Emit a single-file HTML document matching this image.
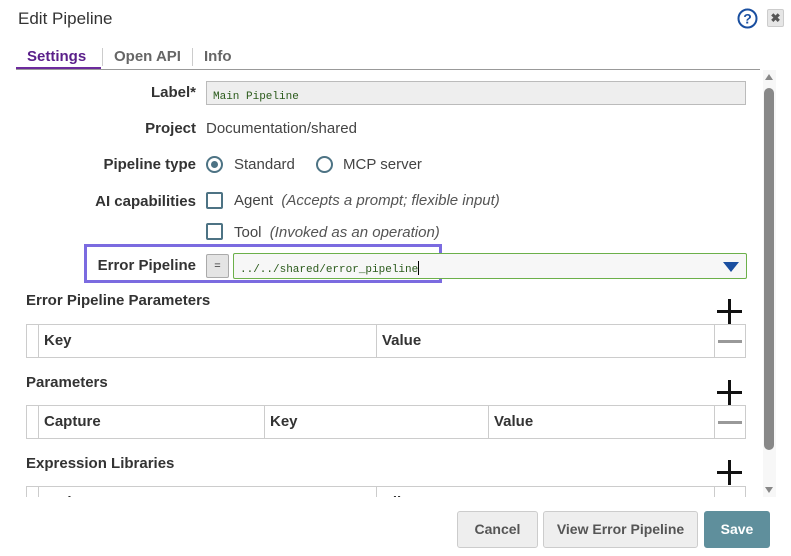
<!DOCTYPE html>
<html><head><style>
*{box-sizing:border-box;margin:0;padding:0}
body{width:791px;height:556px;background:#fff;font-family:"Liberation Sans",sans-serif;color:#333;position:relative;overflow:hidden}
.a{position:absolute}
.lbl{position:absolute;right:595px;font-weight:bold;font-size:15px;color:#333;text-align:right;white-space:nowrap}
.t{font-size:15px;color:#444;white-space:nowrap}
.h{font-weight:bold;font-size:15px;color:#333}
.tb{position:absolute;border:1px solid #ccc;left:26px;width:720px;height:34px;background:#fff}
.c{position:absolute;top:0;bottom:0;border-left:1px solid #ccc;font-weight:bold;font-size:15px;padding:7px 0 0 5px;color:#333}
.plus{position:absolute;left:717px;width:25px;height:25px}
.plus:before{content:"";position:absolute;left:11px;top:0;width:3px;height:25px;background:#111}
.plus:after{content:"";position:absolute;top:11px;left:0;height:3px;width:25px;background:#111}
.minus{position:absolute;left:718px;width:24px;height:3px;background:#999}
.mono{font-family:"Liberation Mono",monospace;font-size:11px;color:#2a5a1a;line-height:14px}
.btn{position:absolute;top:511px;height:37px;border:1px solid #ccc;border-radius:3px;background:#eee;font-weight:bold;font-size:14px;color:#555;text-align:center;line-height:35px}
</style></head><body>
<div class="a" style="left:18px;top:9px;font-size:17px;color:#333">Edit Pipeline</div>
<svg class="a" style="left:737px;top:8px" width="21" height="21" viewBox="0 0 21 21"><circle cx="10.5" cy="10.5" r="9" fill="none" stroke="#1a4fa0" stroke-width="2"/><text x="10.5" y="15.5" text-anchor="middle" font-family="Liberation Sans" font-weight="bold" font-size="14" fill="#1a4fa0">?</text></svg>
<div class="a" style="left:767px;top:9px;width:17px;height:18px;background:#e6e6e6;border:1px solid #ccc;border-radius:2px;font-size:12px;font-weight:bold;color:#555;text-align:center;line-height:16px">✖</div>
<div class="a" style="left:27px;top:48px;font-weight:bold;font-size:15px;color:#5a1f8a">Settings</div>
<div class="a" style="left:16px;top:67px;width:85px;height:3px;background:#6c2a9c"></div>
<div class="a" style="left:102px;top:48px;width:1px;height:18px;background:#ccc"></div>
<div class="a" style="left:114px;top:48px;font-weight:bold;font-size:15px;color:#666">Open API</div>
<div class="a" style="left:192px;top:48px;width:1px;height:18px;background:#ccc"></div>
<div class="a" style="left:204px;top:48px;font-weight:bold;font-size:15px;color:#666">Info</div>
<div class="a" style="left:16px;top:69px;width:744px;height:1px;background:#999"></div>
<!-- scrollbar -->
<div class="a" style="left:763px;top:70px;width:13px;height:427px;background:#f7f7f7"></div>
<div class="a" style="left:765px;top:74px;width:0;height:0;border-left:4px solid transparent;border-right:4px solid transparent;border-bottom:6px solid #888"></div>
<div class="a" style="left:764px;top:88px;width:10px;height:362px;background:#888;border-radius:5px"></div>
<div class="a" style="left:765px;top:487px;width:0;height:0;border-left:4px solid transparent;border-right:4px solid transparent;border-top:6px solid #888"></div>

<div class="lbl" style="top:84px">Label*</div>
<div class="a" style="left:206px;top:81px;width:540px;height:24px;background:#eee;border:1px solid #bbb;padding:4px 6px"><span class="mono">Main Pipeline</span></div>
<div class="lbl" style="top:120px">Project</div>
<div class="a t" style="left:206px;top:120px">Documentation/shared</div>
<div class="lbl" style="top:156px">Pipeline type</div>
<div class="a" style="left:206px;top:156px;width:17px;height:17px;border:2px solid #4d7384;border-radius:50%"></div>
<div class="a" style="left:211px;top:161px;width:7px;height:7px;background:#4d7384;border-radius:50%"></div>
<div class="a t" style="left:234px;top:156px">Standard</div>
<div class="a" style="left:316px;top:156px;width:17px;height:17px;border:2px solid #4d7384;border-radius:50%"></div>
<div class="a t" style="left:343px;top:156px">MCP server</div>
<div class="lbl" style="top:193px">AI capabilities</div>
<div class="a" style="left:206px;top:192px;width:17px;height:17px;border:2px solid #4d7384;border-radius:2px"></div>
<div class="a t" style="left:234px;top:192px">Agent <i style="color:#555;margin-left:4px">(Accepts a prompt; flexible input)</i></div>
<div class="a" style="left:206px;top:223px;width:17px;height:17px;border:2px solid #4d7384;border-radius:2px"></div>
<div class="a t" style="left:234px;top:224px">Tool <i style="color:#555;margin-left:4px">(Invoked as an operation)</i></div>
<div class="a" style="left:84px;top:244px;width:358px;height:39px;border:3px solid #7b6be0"></div>
<div class="lbl" style="top:257px">Error Pipeline</div>
<div class="a" style="left:206px;top:254px;width:23px;height:24px;background:#e4e4e4;border:1px solid #aaa;border-radius:2px;font-size:11px;text-align:center;line-height:22px">=</div>
<div class="a" style="left:233px;top:253px;width:514px;height:26px;background:#f7f7f7;border:1px solid #6cb04a;border-radius:2px;padding:5px 6px"><span class="mono">../../shared/error_pipeline</span><span style="display:inline-block;width:1px;height:14px;background:#000;vertical-align:middle"></span></div>
<div class="a" style="left:723px;top:262px;width:0;height:0;border-left:8px solid transparent;border-right:8px solid transparent;border-top:10px solid #1a4fa0"></div>

<div class="a h" style="left:26px;top:292px">Error Pipeline Parameters</div>
<div class="plus" style="top:299px"></div>
<div class="tb" style="top:324px"><div class="c" style="left:11px">Key</div><div class="c" style="left:349px">Value</div><div class="c" style="left:687px"></div></div>
<div class="minus" style="top:340px"></div>

<div class="a h" style="left:26px;top:374px">Parameters</div>
<div class="plus" style="top:380px"></div>
<div class="tb" style="top:405px"><div class="c" style="left:11px">Capture</div><div class="c" style="left:237px">Key</div><div class="c" style="left:461px">Value</div><div class="c" style="left:687px"></div></div>
<div class="minus" style="top:421px"></div>

<div class="a h" style="left:26px;top:455px">Expression Libraries</div>
<div class="plus" style="top:460px"></div>
<div class="a" style="left:0;top:486px;width:760px;height:11px;overflow:hidden"><div class="tb" style="top:0"><div class="c" style="left:11px">Path</div><div class="c" style="left:349px">Alias</div><div class="c" style="left:687px"></div></div></div>

<div class="btn" style="left:457px;width:81px">Cancel</div>
<div class="btn" style="left:543px;width:155px">View Error Pipeline</div>
<div class="btn" style="left:704px;width:66px;background:#5f8f9c;border-color:#5f8f9c;color:#fff">Save</div>
</body></html>
